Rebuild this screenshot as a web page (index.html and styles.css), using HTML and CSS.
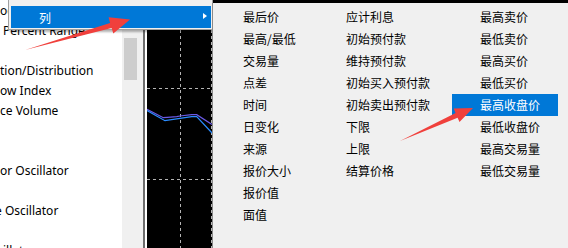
FILE: index.html
```html
<!DOCTYPE html>
<html>
<head>
<meta charset="utf-8">
<link rel="stylesheet" href="styles.css">
</head>
<body>
<div class="stage">
  <div class="list">
    <div class="row">oc</div>
    <div class="row r-indent">Percent Range</div>
    <div class="row"></div>
    <div class="row">tion/Distribution</div>
    <div class="row">ow Index</div>
    <div class="row">ce Volume</div>
    <div class="row"></div>
    <div class="row"></div>
    <div class="row">or Oscillator</div>
    <div class="row"></div>
    <div class="row r-clip">e Oscillator</div>
    <div class="row"></div>
    <div class="row r-indent">illator</div>
  </div>
  <div class="scrollbar"><div class="thumb"></div></div>
  <div class="gap"></div>
  <div class="chart">
    <svg class="chart-svg" width="65" height="248" viewBox="0 0 65 248">
      <g stroke="#b4b4b4" stroke-width="1" stroke-dasharray="3 3" fill="none">
        <line x1="0" y1="88.5" x2="64" y2="88.5"/>
        <line x1="0" y1="179.5" x2="64" y2="179.5"/>
        <line x1="33.5" y1="30" x2="33.5" y2="248"/>
        <line x1="64.5" y1="30" x2="64.5" y2="248"/>
      </g>
      <polyline fill="none" stroke="#6a5ae6" stroke-width="1.2" points="0,109.3 16.3,117.7 20.3,117.3 29.7,116.7 33,116 44.7,114.7 49.7,114.7 65,124.5"/>
      <polyline fill="none" stroke="#2a8cff" stroke-width="1.2" points="0,110.5 18,120.7 31.3,118.7 44.7,116.7 49.7,116.7 65,133"/>
    </svg>
  </div>
  <div class="backdrop"></div>
</div>

<div class="menu">
  <div class="menu-item active"><span class="label">列</span><span class="caret"></span></div>
</div>

<div class="submenu">
  <div class="col col-1">
    <div class="item">最后价</div>
    <div class="item">最高/最低</div>
    <div class="item">交易量</div>
    <div class="item">点差</div>
    <div class="item">时间</div>
    <div class="item">日变化</div>
    <div class="item">来源</div>
    <div class="item">报价大小</div>
    <div class="item">报价值</div>
    <div class="item">面值</div>
  </div>
  <div class="col col-2">
    <div class="item">应计利息</div>
    <div class="item">初始预付款</div>
    <div class="item">维持预付款</div>
    <div class="item">初始买入预付款</div>
    <div class="item">初始卖出预付款</div>
    <div class="item">下限</div>
    <div class="item">上限</div>
    <div class="item">结算价格</div>
  </div>
  <div class="col col-3">
    <div class="item">最高卖价</div>
    <div class="item">最低卖价</div>
    <div class="item">最高买价</div>
    <div class="item">最低买价</div>
    <div class="item active">最高收盘价</div>
    <div class="item">最低收盘价</div>
    <div class="item">最高交易量</div>
    <div class="item">最低交易量</div>
  </div>
</div>

<svg class="arrows" width="568" height="248" viewBox="0 0 568 248">
  <polygon fill="#f0403c" points="25,50 110.1,23.1 108.6,17.3 130,19.5 113.3,33.4 111.6,27.9"/>
  <polygon fill="#f0403c" points="400,141 455.6,113.1 453.7,108.6 473,108 459.5,122 457.6,117.7"/>
</svg>
</body>
</html>
```

FILE: styles.css
```css
html, body {
  margin: 0;
  padding: 0;
}
body {
  width: 568px;
  height: 248px;
  overflow: hidden;
  position: relative;
  background: #f0f0f0;
}
.stage {
  display: flex;
  height: 248px;
}
.list {
  width: 122px;
  background: #fff;
  padding-top: 1px;
  overflow: hidden;
  font-family: "Noto Sans", "Open Sans", sans-serif;
  font-size: 12px;
  color: #000;
}
.row {
  height: 20px;
  line-height: 20px;
  white-space: nowrap;
}
.r-indent { padding-left: 3px; }
.r-clip { margin-left: -5px; }
.scrollbar {
  width: 17px;
  background: #f0f0f0;
}
.thumb {
  margin: 38px 2px 0 2px;
  height: 42px;
  background: #cdcdcd;
}
.gap {
  width: 4px;
  background: #f0f0f0;
}
.chart {
  width: 65px;
  border-left: 2px solid #6d6d6d;
  box-shadow: inset 2px 0 0 #ffffff;
  padding-left: 2px;
  background: #000;
}
.chart-svg {
  display: block;
}
.backdrop {
  flex: 1;
  background: #000;
}

.menu {
  position: absolute;
  left: 8px;
  top: 0;
  width: 205px;
  box-sizing: border-box;
  background: #f0f0f0;
  border: 1px solid #a0a0a0;
  border-top: none;
  padding: 6px 1px 1px 2px;
  box-shadow: 2px 2px 2px rgba(0, 0, 0, 0.3);
}
.menu-item {
  height: 22px;
  display: flex;
  align-items: center;
  justify-content: space-between;
  padding: 0 4px 0 28px;
  font-family: "Noto Sans CJK SC", "Noto Sans", sans-serif;
  font-size: 12px;
}
.menu-item.active {
  background: #0078d7;
  color: #fff;
}
.caret {
  width: 0;
  height: 0;
  border-left: 4px solid #fff;
  border-top: 3.5px solid transparent;
  border-bottom: 3.5px solid transparent;
  margin-top: -2px;
}

.submenu {
  position: absolute;
  left: 212px;
  top: 3px;
  right: 0;
  bottom: 0;
  background: #f0f0f0;
  border-left: 1px solid #8a8a8a;
  padding: 3px 0 0 2px;
  display: flex;
  align-items: flex-start;
  font-family: "Noto Sans CJK SC", "Noto Sans", sans-serif;
  font-size: 12px;
  color: #000;
}
.col {
  display: flex;
  flex-direction: column;
}
.col-1 { width: 103px; }
.col-2 { width: 134px; }
.col-3 { width: 106px; }
.item {
  height: 22px;
  line-height: 22px;
  padding-left: 28px;
  white-space: nowrap;
}
.item.active {
  background: #0078d7;
  color: #fff;
}

.arrows {
  position: absolute;
  left: 0;
  top: 0;
  pointer-events: none;
}
```
